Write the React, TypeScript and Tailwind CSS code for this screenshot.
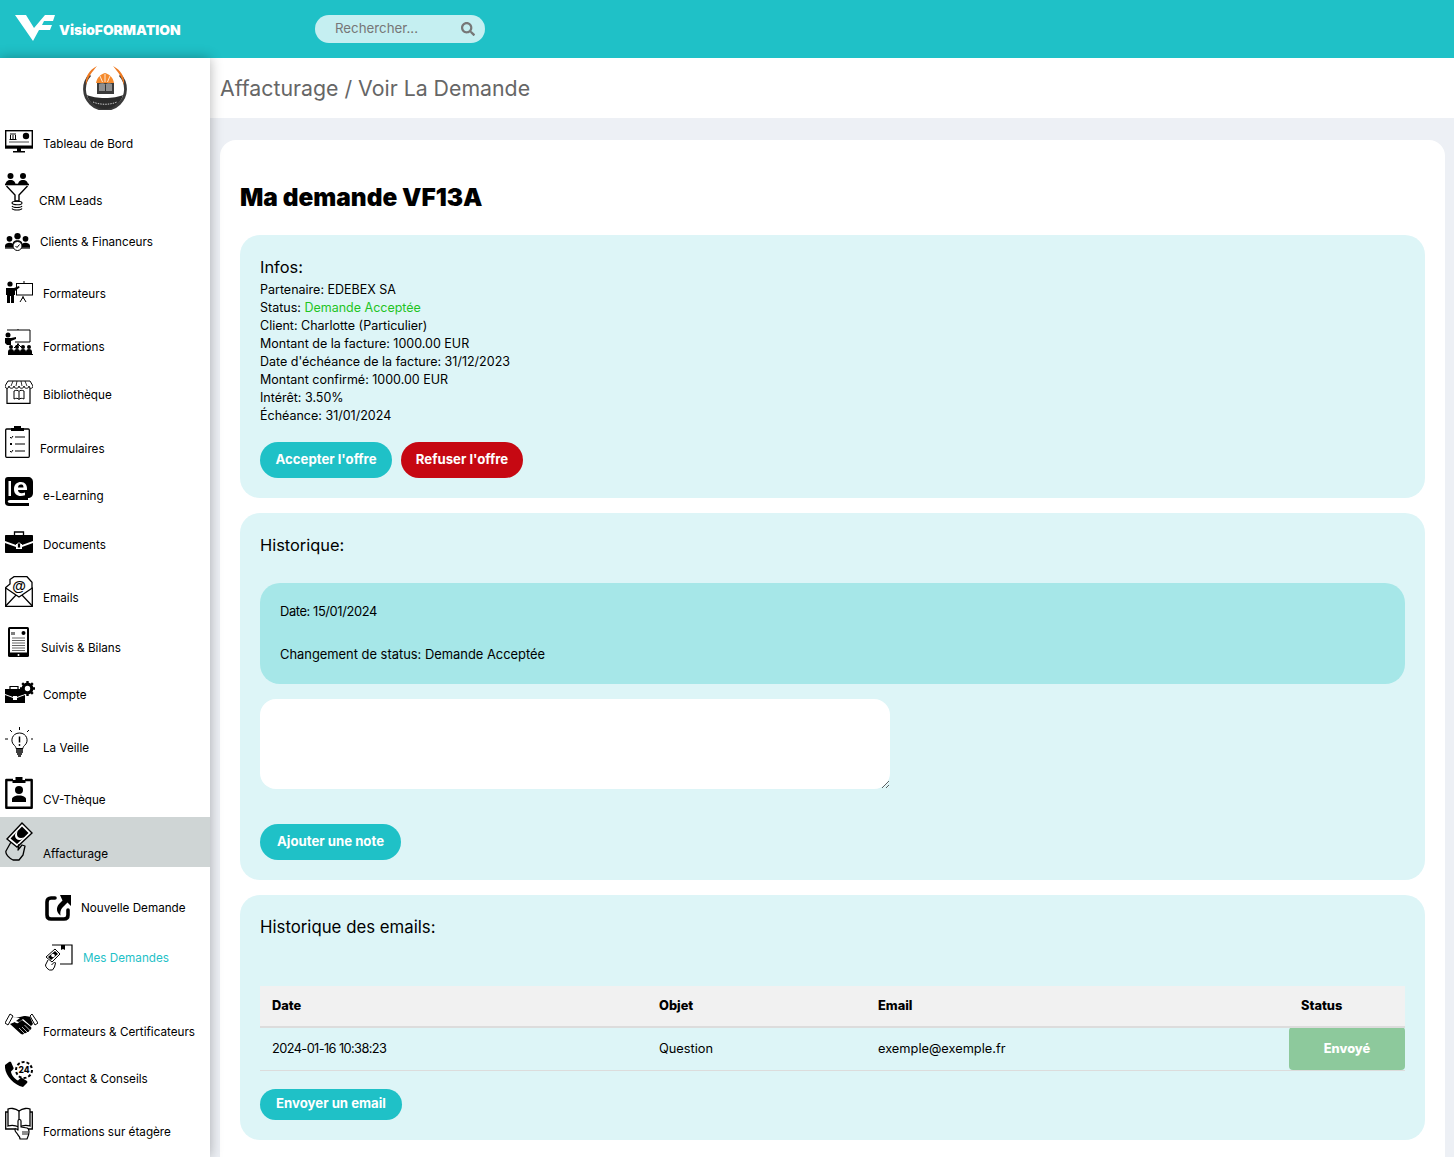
import type { ReactNode } from "react";
import { FaSearch } from "react-icons/fa";

const font = { fontFamily: "Inter" };

function Svg({ w, h, children }: { w: number; h: number; children: ReactNode }) {
  return (
    <svg width={w} height={h} viewBox={`0 0 ${w} ${h}`} className="block shrink-0">
      {children}
    </svg>
  );
}

function Person({ x, y, s = 1 }: { x: number; y: number; s?: number }) {
  return (
    <g transform={`translate(${x} ${y}) scale(${s})`}>
      <circle cx="0" cy="3" r="3" fill="#000" />
      <path d="M-5 12c0-3.500 2-5 5-5s5 1.500 5 5z" fill="#000" />
    </g>
  );
}

const icons: Record<string, ReactNode> = {
  tableau: (
    <Svg w={28} h={23}>
      <rect x=".7" y=".7" width="26.600" height="17" fill="none" stroke="#000" strokeWidth="1.400" />
      <rect x="0" y="15.500" width="28" height="3" fill="#000" />
      <path d="M12 18h4v3h-4zM8 21h12v1.500H8z" fill="#000" />
      <path d="M5 4h6M5.500 5v4M8 5v4M10.500 5v4M4.500 9.500h7" stroke="#000" strokeWidth="1" fill="none" />
      <circle cx="21" cy="6" r="3.200" fill="#000" />
      <path d="M4 12h20" stroke="#888" strokeWidth="1.500" />
    </Svg>
  ),
  crm: (
    <Svg w={24} h={38}>
      <Person x={5.500} y={0} />
      <Person x={18} y={0} />
      <path d="M0 11.500h24" stroke="#000" strokeWidth="1.600" />
      <path d="M1.500 13 10 22v6h4v-6l8.500-9" fill="none" stroke="#000" strokeWidth="1.400" />
      <ellipse cx="12" cy="30" rx="5" ry="1.800" fill="none" stroke="#000" strokeWidth="1.100" />
      <path d="M7 33c1 2 9 2 10 0M7 35.500c1 2 9 2 10 0" fill="none" stroke="#000" strokeWidth="1.100" />
    </Svg>
  ),
  clients: (
    <Svg w={25} h={18}>
      <Person x={12.500} y={0} s={1.050} />
      <Person x={4.500} y={3} s={.95} />
      <Person x={20.500} y={3} s={.95} />
      <path d="M0 15h25" stroke="#000" strokeWidth="1.200" />
      <circle cx="12.500" cy="13" r="4.500" fill="#fff" stroke="#000" strokeWidth="1" />
      <path d="m10.500 13 1.500 1.500 2.500-3" fill="none" stroke="#000" strokeWidth="1" />
    </Svg>
  ),
  formateurs: (
    <Svg w={28} h={22}>
      <circle cx="5" cy="3" r="2.600" fill="#000" />
      <path d="M1 7h8l5-2 .6 1.400L10 10v4H9v8H6v-7H5v7H2v-8H1z" fill="#000" />
      <rect x="11.500" y="2.500" width="16" height="11.500" fill="none" stroke="#000" strokeWidth="1" />
      <path d="M18 15v3M18 16l-3 5M18 16l3 5M19 0v2.500" stroke="#000" strokeWidth="1" fill="none" />
    </Svg>
  ),
  formations: (
    <Svg w={28} h={26}>
      <path d="M2 1h23v12H10" fill="none" stroke="#000" strokeWidth="1" />
      <path d="M13 0v1M13 14v3M13 15l-4 4M13 15l4 4" stroke="#000" strokeWidth="1" fill="none" />
      <circle cx="3" cy="6" r="2.500" fill="#000" />
      <path d="M0 9h6l5-1v2l-5 2v4H2l-2-2z" fill="#000" />
      {[6, 12, 18, 24].map((x) => (
        <g key={x}>
          <circle cx={x} cy="18" r="2" fill="#000" />
          <path d={`M${x - 3} 25v-2c0-2 1-3 3-3s3 1 3 3v2z`} fill="#000" />
        </g>
      ))}
      <path d="M3 25.500h25" stroke="#000" />
    </Svg>
  ),
  biblio: (
    <Svg w={28} h={24}>
      <path d="M2 8v15.300h23V8" fill="none" stroke="#000" strokeWidth="1.200" />
      <path d="M3 1h22l3 5c0 3-4 3-4 0 0 3-5 3-5 0 0 3-5 3-5 0 0 3-5 3-5 0 0 3-5 3-5 0 0 3-4 3-4 0z" fill="#fff" stroke="#000" strokeWidth="1" />
      <path d="M8 1 6 6M12 1l-1 5M16 1l1 5M20 1l2 5" stroke="#000" strokeWidth=".8" />
      <path d="M9 11c2-1 4-1 5 .5 1-1.500 3-1.500 5-.5v8c-2-1-4-1-5 .5-1-1.500-3-1.500-5-.5zM14 11.500v8" fill="none" stroke="#000" strokeWidth="1" />
    </Svg>
  ),
  formulaires: (
    <Svg w={25} h={32}>
      <rect x=".7" y="3" width="23.600" height="28.300" rx="1" fill="none" stroke="#000" strokeWidth="1.300" />
      <path d="M9 0h7v2h3v3H6V2h3z" fill="#000" />
      <path d="M10 11h10M10 18h10M10 25h10" stroke="#000" strokeWidth="1.200" />
      <path d="m5 11 1.300 1.300L8 10M5 17l2 2M7 17l-2 2M5 25l1.300 1.300L8 24" fill="none" stroke="#000" strokeWidth="1" />
    </Svg>
  ),
  elearning: (
    <Svg w={28} h={29}>
      <path d="M3 0h20c3 0 5 2 5 5v11c0 3-2 5-5 5v2H5c-3 0-3 3 0 3h19v3H4c-2 0-4-1-4-3V3c0-2 1-3 3-3z" fill="#000" />
      <rect x="3.500" y="4" width="2.500" height="15" fill="#fff" />
      <path d="M16 5c4 0 6 3 6 7v1h-9c0 3 3 4 7 2.500v2.800c-6 2-11 0-11-6 0-5 3-7.300 7-7.300zm-3 5.500h5.500c0-2.500-1-3-2.700-3-1.500 0-2.600 1-2.800 3z" fill="#fff" />
    </Svg>
  ),
  documents: (
    <Svg w={28} h={22}>
      <path d="M9.500 4V1h9v3" fill="none" stroke="#000" strokeWidth="1.300" />
      <path d="M1 4h26c.6 0 1 .4 1 1v5l-11 4v-1h-6v1L0 10V5c0-.6.400-1 1-1z" fill="#000" />
      <path d="M0 12l11 4v2h6v-2l11-4v9c0 .6-.4 1-1 1H1c-.6 0-1-.4-1-1z" fill="#000" />
      <rect x="12.500" y="12" width="3" height="5" rx="1" fill="#000" stroke="#fff" strokeWidth=".8" />
    </Svg>
  ),
  emails: (
    <Svg w={28} h={31}>
      <path d="M.7 11.500 5 8V3.500L9 .7h13l5 5.500v5.300l.3.300V30.300H.7z" fill="none" stroke="#000" strokeWidth="1.300" />
      <path d="M.7 30 11 19l3 2 3-2 10.300 11M.7 12 11 19M27.300 12 17 19" fill="none" stroke="#000" strokeWidth="1.300" />
      <text x="14" y="15" textAnchor="middle" fontFamily="Liberation Sans" fontSize="14" fontWeight="700">@</text>
    </Svg>
  ),
  suivis: (
    <Svg w={21} h={30}>
      <rect width="21" height="30" rx="1.500" fill="#000" />
      <rect x="2" y="2" width="17" height="23.500" fill="#fff" />
      <path d="M4 5v3M6 5v3" stroke="#000" />
      <circle cx="15.500" cy="6" r="2" fill="#000" />
      <path d="M4 11h13M4 13.500h13M4 16h13M4 18.500h13M4 21h13M4 23.500h13" stroke="#555" strokeWidth=".9" />
      <circle cx="10.500" cy="28" r="1" fill="#fff" />
    </Svg>
  ),
  compte: (
    <Svg w={30} h={23}>
      <path d="M5 9V6.500h8V9" fill="none" stroke="#000" strokeWidth="1.200" />
      <path d="M0 9h20v5l-8 3v-1H8v1l-8-3z" fill="#000" />
      <path d="M0 15l8 3v2h4v-2l8-3v8H0z" fill="#000" />
      <circle cx="22.500" cy="8.500" r="4.300" fill="#fff" stroke="#000" strokeWidth="3.200" />
      <path d="M22.500 1v2.500M22.500 13.500V16M15 8.500h2.500M27.500 8.500H30M17.200 3.200 19 5M26 12l1.800 1.800M17.200 13.800 19 12M26 5l1.800-1.800" stroke="#000" strokeWidth="2.400" />
    </Svg>
  ),
  veille: (
    <Svg w={28} h={30}>
      <path d="M9.500 18.500c-5-4-2.500-12.500 5-12.500s10 8.500 5 12.500c-1.500 1.200-1.500 3-1.500 3h-7s0-1.800-1.500-3z" fill="none" stroke="#000" strokeWidth="1" />
      <path d="M14.500 9.500v6" stroke="#000" strokeWidth="1.500" />
      <circle cx="14.500" cy="18" r=".9" fill="#000" />
      <path d="M11 23h7M11 25h7M12 27h5M13 29h3" stroke="#000" strokeWidth="1.300" />
      <path d="M14.500 0v3M5 3l2 2M24 3l-2 2M0 12h3M26 12h2" stroke="#000" strokeWidth="1" />
    </Svg>
  ),
  cv: (
    <Svg w={28} h={33}>
      <path d="M8 4H1.300v27.700h25.400V4H20" fill="none" stroke="#000" strokeWidth="2.400" strokeLinejoin="round" />
      <path d="M10.500 1h7v3h3v3h-13V4h3z" fill="#000" />
      <circle cx="14" cy="14" r="4" fill="#000" />
      <path d="M7 26v-3c0-2 3-3 5-3.500h4c2 .5 5 1.500 5 3.500v3z" fill="#000" />
    </Svg>
  ),
  affacturage: (
    <Svg w={28} h={39}>
      <path d="M2 17 17 1l10 10-15 14z" fill="#fff" stroke="#000" strokeWidth="1.400" />
      <path d="m5.500 16.500 11.500-12 6.500 6.500-11.500 11z" fill="#000" />
      <circle cx="14.500" cy="13.500" r="4.500" fill="#fff" />
      <circle cx="16" cy="12" r="4" fill="#000" />
      <path d="M6 20 1 29c-1 3 3 7 7 9h6l4-5 2-9-3-1-4 5 1-6" fill="none" stroke="#000" strokeWidth="1.300" strokeLinejoin="round" />
    </Svg>
  ),
  nouvelle: (
    <Svg w={26} h={26}>
      <path d="M10 3H6C3.500 3 2 4.500 2 7v13c0 2.500 1.500 4 4 4h13c2.500 0 4-1.500 4-4v-5" fill="none" stroke="#000" strokeWidth="3.600" strokeLinecap="round" />
      <path d="M15 0h11v11l-3.500-3.500-5 5c-2 2-2.500 5-2 8-4-3-5-8-1-12l3-3z" fill="#000" />
    </Svg>
  ),
  mes: (
    <Svg w={28} h={27}>
      <path d="M7 1h20v19H15" fill="none" stroke="#000" strokeWidth="1.200" />
      <path d="M16 1v5l2-1 2 1V1z" fill="#000" />
      <path d="m1 13 9-8 5 5-8 8z" fill="#fff" stroke="#000" />
      <path d="m3 13 7-6 3 3-7 6z" fill="#000" />
      <circle cx="8" cy="11.500" r="1.800" fill="#fff" />
      <path d="M3 16 .5 21c0 2 2 4 4 5h3l2-3 1-4-1-1-3 3" fill="#fff" stroke="#000" />
    </Svg>
  ),
  certif: (
    <Svg w={33} h={23}>
      <path d="M5 1 0 10l3 2 5-9zM27 1l6 9-3 2-5-9z" fill="#fff" stroke="#000" strokeWidth="1" />
      <path d="M7 4c3 1 5 0 8 0l4-1c2 0 4 0 6 1l3 7-2 2-8-7-4 3-3-1 4-3" fill="#000" />
      <path d="m5 11 11 10c2 1 3 0 3-1 2 1 3-1 3-1 1.500.5 2.500-1 2.500-2 1.500 0 2.500-1.500 1.500-3L17 7l-4 3c-1 .5-3 0-3-1" fill="#000" />
      <path d="M19 20 14 15M22 19l-5-5M24.500 17l-5-5" stroke="#fff" strokeWidth=".7" />
    </Svg>
  ),
  contact: (
    <Svg w={28} h={26}>
      <path d="M4 1 0 4c-1 9 8 20 18 22l4-4c.6-.6.4-1.400 0-2l-5-3c-.6-.4-1.200 0-2 .6l-2 2c-3-1-7-6-7-9l2-2c.6-.8.8-1.400.4-2L6 1c-.5-.5-1.400-.5-2 0z" fill="#000" />
      <circle cx="19" cy="9" r="8" fill="none" stroke="#000" strokeWidth="2" strokeDasharray="3 2" />
      <text x="19" y="12" textAnchor="middle" fontFamily="Inter" fontSize="8.500" fontWeight="800">24</text>
    </Svg>
  ),
  etagere: (
    <Svg w={28} h={33}>
      <path d="M14 4C10 1 5 1 3 2v17c3-1 7-1 11 1 4-2 8-2 11-1V2c-2-1-7-1-11 2z" fill="none" stroke="#000" strokeWidth="1.300" />
      <path d="M3 5H.7v17H11M25 5h2.300v17H23" fill="none" stroke="#000" strokeWidth="1.300" />
      <path d="M14 4v9" stroke="#000" strokeWidth="1.300" />
      <path d="M13 28c-1-2-3-3-3-5s2-1 3 0v-9c0-2 3-2 3 0v6l6 1c2 .5 2 2 2 4 0 3-1 5-2 7h-7c0-2-1-3-2-4z" fill="#fff" stroke="#000" strokeWidth="1.200" strokeLinejoin="round" />
      <path d="M18 24v4M20 24v4M22 24v4" stroke="#000" strokeWidth=".9" />
    </Svg>
  ),
};

type Item = {
  label: string;
  icon: string;
  row: string;
  slot: string;
  text?: string;
  color?: string;
};

const items: Item[] = [
  { label: "Tableau de Bord", icon: "tableau", row: "h-[35px]", slot: "w-[38px] pl-[5px]" },
  { label: "CRM Leads", icon: "crm", row: "h-[58px]", slot: "w-[34px] pl-[5px]", text: "mb-[1px]" },
  { label: "Clients & Financeurs", icon: "clients", row: "h-[40px]", slot: "w-[35px] pl-[5px]" },
  { label: "Formateurs", icon: "formateurs", row: "h-[52px]", slot: "w-[38px] pl-[5px]" },
  { label: "Formations", icon: "formations", row: "h-[52px]", slot: "w-[38px] pl-[5px]", text: "mb-[-1px]" },
  { label: "Bibliothèque", icon: "biblio", row: "h-[49px]", slot: "w-[38px] pl-[5px]" },
  { label: "Formulaires", icon: "formulaires", row: "h-[54px]", slot: "w-[35px] pl-[5px]" },
  { label: "e-Learning", icon: "elearning", row: "h-[48px]", slot: "w-[38px] pl-[5px]", text: "mb-[1px]" },
  { label: "Documents", icon: "documents", row: "h-[47px]", slot: "w-[38px] pl-[5px]", text: "mb-[-1px]" },
  { label: "Emails", icon: "emails", row: "h-[54px]", slot: "w-[38px] pl-[5px]" },
  { label: "Suivis & Bilans", icon: "suivis", row: "h-[50px]", slot: "w-[36px] pl-[8px]" },
  { label: "Compte", icon: "compte", row: "h-[46px]", slot: "w-[38px] pl-[5px]", text: "mb-[-1px]" },
  { label: "La Veille", icon: "veille", row: "h-[54px]", slot: "w-[38px] pl-[5px]" },
  { label: "CV-Thèque", icon: "cv", row: "h-[52px]", slot: "w-[38px] pl-[5px]" },
  { label: "Affacturage", icon: "affacturage", row: "h-[50px] mt-2 pb-[6px] bg-[#cfd5d5]", slot: "w-[38px] pl-[5px]", text: "mb-[-2px]" },
  { label: "Nouvelle Demande", icon: "nouvelle", row: "h-[54px]", slot: "w-[76px] pl-[45px]", text: "mb-[4px]" },
  { label: "Mes Demandes", icon: "mes", row: "h-[50px]", slot: "w-[78px] pl-[45px]", text: "mb-[4px]", color: "text-[#1fc1c7]" },
  { label: "Formateurs & Certificateurs", icon: "certif", row: "h-[65px]", slot: "w-[38px] pl-[5px]", text: "mb-[-5px]" },
  { label: "Contact & Conseils", icon: "contact", row: "h-[51px]", slot: "w-[38px] pl-[5px]", text: "mb-[-1px]" },
  { label: "Formations sur étagère", icon: "etagere", row: "h-[53px]", slot: "w-[38px] pl-[5px]", text: "mb-[-1px]" },
];

const infos: ReactNode[] = [
  "Partenaire: EDEBEX SA",
  <>Status: <span className="text-[#1fc41f]">Demande Acceptée</span></>,
  "Client: Charlotte (Particulier)",
  "Montant de la facture: 1000.00 EUR",
  "Date d'échéance de la facture: 31/12/2023",
  "Montant confirmé: 1000.00 EUR",
  "Intérêt: 3.50%",
  "Échéance: 31/01/2024",
];

function Pill({ children, className }: { children: ReactNode; className: string }) {
  return (
    <button className={`flex items-center justify-center rounded-full text-[13.200px] font-bold text-white ${className}`}>
      {children}
    </button>
  );
}

function Logo() {
  return (
    <svg width="44" height="44" viewBox="0 0 44 44" className="block">
      <path d="M7 9A20.500 20.500 0 1 0 37 9" fill="none" stroke="#3a3a3a" strokeWidth="2.800" />
      <path d="M14 0C6 4 2 11 3 19c2-8 6-13 11-19zM30 0c8 4 12 11 11 19-2-8-6-13-11-19z" fill="#ee7a22" />
      <path d="M13 17c1-6 5-9 9-10 4 1 8 4 9 10z" fill="#f58a2c" />
      <path d="M22 8v8M17 10l2.500 6M27 10l-2.500 6" stroke="#fff" strokeWidth=".8" />
      <rect x="14" y="17" width="17" height="11" fill="#3b3b3b" />
      <path d="M16 18c2-1 5-1 6.500.5 1.500-1.500 4.500-1.500 6.500-.5v7H16z" fill="#8f8f8f" />
      <path d="M22.500 18.500V25" stroke="#333" />
      <path d="M4 29c5 2 10 3 18 3s13-1 18-3c-2 8-10 14-18 14S6 37 4 29z" fill="#2b2b2b" />
      <path d="M10 36c7 3 17 3 24 0" fill="none" stroke="#ccc" strokeWidth="1" strokeDasharray="1.500 1" />
    </svg>
  );
}

export default function App() {
  return (
    <div className="flex h-[1157px] flex-col overflow-hidden bg-[#edf0f5] text-black" style={font}>
      <header className="flex h-[58px] shrink-0 items-center bg-[#1fc1c7]">
        <div className="flex w-[315px] shrink-0 items-start self-start pl-[15px] pt-[15px]">
          <svg width="40" height="27" viewBox="0 0 40 27" className="block">
            <path d="M0 0h11l8 13L30 0h10l-2 6H29l-2 4h10l-2 5H24l-6 11z" fill="#fff" />
          </svg>
          <span className="ml-1 mt-[7px] text-[13.800px] font-black leading-[16px] text-white">VisioFORMATION</span>
        </div>
        <div className="flex h-7 w-[170px] items-center justify-between rounded-full bg-[#c5eff1] pl-5 pr-[10px]">
          <span className="text-[13.300px] text-[#777]">Rechercher...</span>
          <FaSearch className="text-[14px] text-[#777]" />
        </div>
      </header>
      <div className="flex min-h-0 flex-1">
        <aside className="relative z-10 w-[210px] shrink-0 bg-white shadow-[0_0_12px_rgba(0,0,0,0.3)]">
          <div className="flex h-[60px] justify-center pt-2">
            <Logo />
          </div>
          <nav>
            {items.map((it) => (
              <div key={it.label} className={`flex items-end ${it.row}`}>
                <div className={`shrink-0 ${it.slot}`}>{icons[it.icon]}</div>
                <span className={`ml-[5px] text-[11.700px] leading-[18px] ${it.text ?? ""} ${it.color ?? "text-black"}`}>
                  {it.label}
                </span>
              </div>
            ))}
          </nav>
        </aside>
        <main className="min-w-0 flex-1">
          <div className="flex h-[60px] items-center bg-white pb-px pl-[10px] pt-[2px] text-[21.300px] text-[#666]">
            Affacturage / Voir La Demande
          </div>
          <div className="ml-[10px] mr-[9px] mt-[22px] rounded-t-2xl bg-white px-5 pb-5">
            <h1 className="flex h-[95px] items-end pb-[23px] text-[24.400px] font-black leading-[30px]">Ma demande VF13A</h1>
            <section className="rounded-[20px] bg-[#ddf5f7] p-5">
              <h2 className="text-[16.400px] leading-[24px]">Infos:</h2>
              <div className="mt-[2px] text-[12.500px] leading-[18px]">
                {infos.map((l, i) => (
                  <div key={i}>{l}</div>
                ))}
              </div>
              <div className="mt-[17px] flex gap-[9px]">
                <Pill className="h-9 w-[132px] bg-[#1fc1c7]">Accepter l'offre</Pill>
                <Pill className="h-9 w-[122px] bg-[#c60812]">Refuser l'offre</Pill>
              </div>
            </section>
            <section className="mt-[15px] rounded-[20px] bg-[#ddf5f7] p-5">
              <h2 className="text-[16.400px] leading-[24px]">Historique:</h2>
              <div className="mt-[26px] h-[101px] rounded-[20px] bg-[#a6e7e8] px-5 pt-[20px] text-[12.900px] leading-[18px]">
                <div className="tracking-[-0.4px]">Date: 15/01/2024</div>
                <div className="mt-[25px]">Changement de status: Demande Acceptée</div>
              </div>
              <textarea className="mt-[15px] block h-[90px] w-[630px] rounded-2xl bg-white" />
              <Pill className="mt-[35px] h-9 w-[141px] bg-[#1fc1c7]">Ajouter une note</Pill>
            </section>
            <section className="mt-[15px] rounded-[20px] bg-[#ddf5f7] p-5">
              <h2 className="pt-px text-[16.800px] leading-[23px]">Historique des emails:</h2>
              <table className="mt-[47px] w-full table-fixed border-collapse text-left text-[12.800px]">
                <colgroup>
                  <col className="w-[387px]" />
                  <col className="w-[219px]" />
                  <col />
                  <col className="w-[116px]" />
                </colgroup>
                <thead>
                  <tr className="h-[41px] border-b-2 border-[#dcdcdc] bg-[#f1f1f1]">
                    <th className="px-3 font-extrabold">Date</th>
                    <th className="px-3 font-extrabold">Objet</th>
                    <th className="px-3 font-extrabold">Email</th>
                    <th className="px-3 font-extrabold">Status</th>
                  </tr>
                </thead>
                <tbody>
                  <tr className="h-[43px] border-b border-[#dcdcdc]">
                    <td className="px-3 tracking-[-0.6px]">2024-01-16 10:38:23</td>
                    <td className="px-3">Question</td>
                    <td className="px-3">exemple@exemple.fr</td>
                    <td className="rounded-[4px] bg-[#8dc99c] text-center font-extrabold text-white">Envoyé</td>
                  </tr>
                </tbody>
              </table>
              <Pill className="mt-[18px] h-[31px] w-[142px] bg-[#1fc1c7]">Envoyer un email</Pill>
            </section>
          </div>
        </main>
      </div>
    </div>
  );
}
